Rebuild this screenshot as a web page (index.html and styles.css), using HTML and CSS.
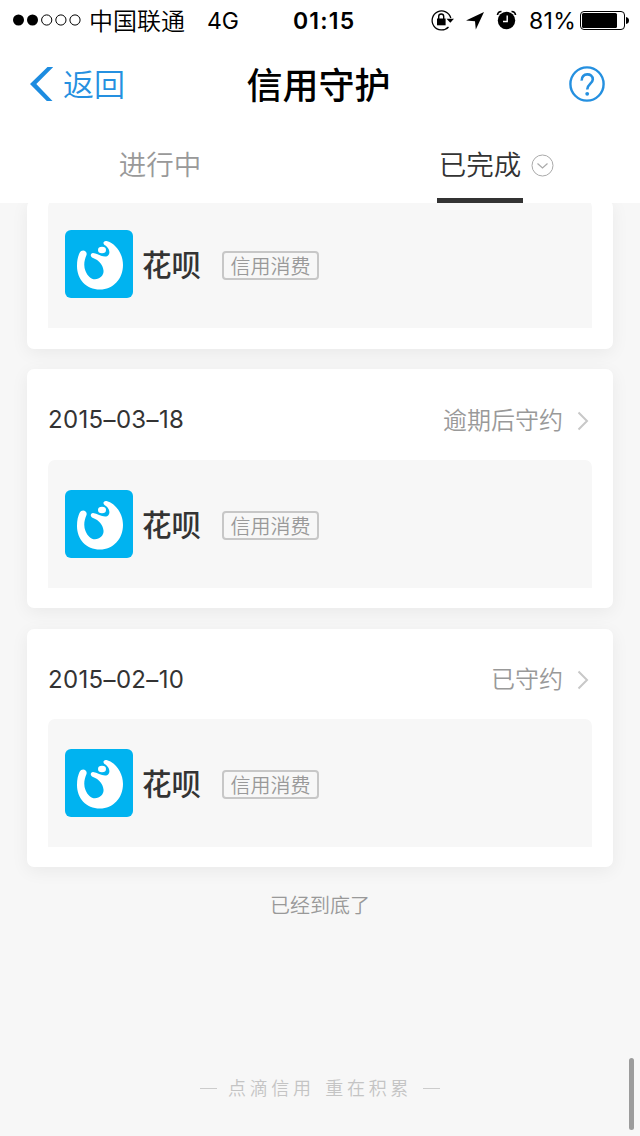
FILE: index.html
```html
<!DOCTYPE html>
<html lang="zh-CN">
<head>
<meta charset="utf-8">
<title>信用守护</title>
<link rel="stylesheet" href="styles.css">
</head>
<body>
<svg class="defs" width="0" height="0">
  <symbol id="logo" viewBox="0 0 68 68">
    <rect width="68" height="68" rx="6" fill="#00b3f0"/>
    <path d="M21.500 25C19 31 18.500 36 20.500 41C22.500 46 26 49.300 30 49.300C35 49 39 45.500 38.500 40.500C38 35 34 30 28 28C25 27 25 23.500 28 23C33 23.500 38 28 42.500 26C46.500 23 43.500 17 39.500 15C37.500 13.500 38.500 10.500 41.500 11C51 13.500 58 24 58 35C58 49 48 59.500 35 59.500C21 59.500 12 49 12 36C12 30 13 26.500 14.500 23C16.500 18.500 22.800 20.500 21.500 25Z" fill="#fff"/>
    <ellipse cx="37" cy="20" rx="4" ry="3.200" fill="#fff"/>
  </symbol>
  <symbol id="chevron" viewBox="0 0 12 20"><path d="M1.500 1.500L10 10L1.500 18.500" fill="none" stroke="#c8c8c8" stroke-width="2"/></symbol>
</svg>
<div class="screen">
  <header class="top">
    <div class="status">
      <svg class="signal" width="68" height="12" viewBox="0 0 68 12">
        <circle cx="5.500" cy="6" r="5.500"/><circle cx="19.500" cy="6" r="5.500"/>
        <g fill="none" stroke="#000"><circle cx="33.700" cy="6" r="5.100"/><circle cx="47.900" cy="6" r="5.100"/><circle cx="62" cy="6" r="5.100"/></g>
      </svg>
      <span class="carrier">中国联通</span>
      <span class="network">4G</span>
      <span class="clock">01:15</span>
      <svg class="tray" width="88" height="24" viewBox="430 8 88 24">
        <path d="M448.500 27A9.500 9.500 0 1 1 450.800 18" fill="none" stroke="#000" stroke-width="1.300"/>
        <path d="M446.500 18.800h7.500l-3.700 4z"/>
        <path d="M437 18.500h8.600v6.800H437z"/><path d="M438.700 19v-2.500a2.500 2.500 0 0 1 5 0V19" fill="none" stroke="#000" stroke-width="1.400"/>
        <path d="M484 12L466 20.500L475 21.300L475.800 29.500Z"/>
        <circle cx="506.500" cy="20.500" r="8.700"/><path d="M507.200 15.500v6h-4.200" fill="none" stroke="#fff" stroke-width="1.400"/>
        <path d="M497.500 15a4 4 0 0 1 4-3.500M511.500 11.500a4 4 0 0 1 4 3.500" fill="none" stroke="#000" stroke-width="1.700"/>
      </svg>
      <span class="percent">81%</span>
      <svg class="battery" width="49" height="19" viewBox="0 0 49 19">
        <rect x=".5" y=".5" width="44" height="18" rx="3.500" fill="none" stroke="#000"/>
        <rect x="2" y="2" width="35" height="15" rx="1.500"/><path d="M46 6q3 .5 3 3.500t-3 3.500z"/>
      </svg>
    </div>
    <nav class="nav">
      <a class="back"><svg width="24" height="36" viewBox="0 0 24 36"><path d="M18.500 1H24.300L7.300 18L23.500 35H17.800L1 18Z" fill="#1d8ce0"/></svg><span>返回</span></a>
      <h1 class="title">信用守护</h1>
      <svg class="help" width="38" height="38" viewBox="0 0 38 38" fill="none" stroke="#2590e0">
        <circle cx="19" cy="19" r="16.600" stroke-width="2.400"/>
        <path d="M13.700 15.600C13.200 7.500 25 7.500 24.800 14.500C24.700 18.500 19.200 19 19.200 24.600" stroke-width="2.600"/><circle cx="19.200" cy="28.800" r="1.900" fill="#2590e0" stroke="none"/>
      </svg>
    </nav>
    <div class="tabs">
      <div class="tab"><span class="tab-label">进行中</span></div>
      <div class="tab"><span class="tab-label tab-current">已完成</span>
        <svg class="filter" width="23" height="23" viewBox="0 0 23 23" fill="none" stroke="#aaa"><circle cx="11.500" cy="11.500" r="10.500"/><path d="M6.500 9.500L11.500 14L16.500 9.500" stroke-width="1.200"/></svg>
      </div>
    </div>
  </header>
  <main class="list">
    <section class="card card-first">
      <div class="entry"><svg class="logo"><use href="#logo"/></svg><b class="name">花呗</b><span class="tag">信用消费</span></div>
    </section>
    <section class="card">
      <div class="card-head"><time class="date">2015–03–18</time><span class="state">逾期后守约</span><svg class="chevron"><use href="#chevron"/></svg></div>
      <div class="entry"><svg class="logo"><use href="#logo"/></svg><b class="name">花呗</b><span class="tag">信用消费</span></div>
    </section>
    <section class="card card-last">
      <div class="card-head"><time class="date">2015–02–10</time><span class="state">已守约</span><svg class="chevron"><use href="#chevron"/></svg></div>
      <div class="entry"><svg class="logo"><use href="#logo"/></svg><b class="name">花呗</b><span class="tag">信用消费</span></div>
    </section>
    <p class="end">已经到底了</p>
    <p class="slogan"><i class="dash"></i><span>点滴信用</span><span>重在积累</span><i class="dash"></i></p>
    <div class="scrollbar"></div>
  </main>
</div>
</body>
</html>
```

FILE: styles.css
```css
* { box-sizing: border-box; }
body { margin: 0; font-family: Inter, "Noto Sans CJK SC", sans-serif; color: #333; background: #f7f7f7; }
h1, p { margin: 0; font-weight: inherit; }
svg { display: block; flex: none; }
span, b, time, h1 { white-space: nowrap; }
.defs { position: absolute; }
.screen { width: 640px; height: 1136px; overflow: hidden; display: flex; flex-direction: column; }
.top { height: 203px; flex: none; background: #fff; color: #000; position: relative; z-index: 1; }
.status { height: 40px; display: flex; align-items: center; padding-left: 13px; font-size: 24px; line-height: 40px; }
.carrier { margin-left: 8px; width: 118px; font-weight: 350; padding-top: 3px; }
.network { width: 86px; font-size: 23px; padding-top: 2px; font-weight: 380; }
.clock { width: 137px; font-weight: 600; font-size: 23px; letter-spacing: 1.200px; padding-top: 2px; }
.percent { margin-left: 11px; width: 51px; font-size: 23px; letter-spacing: .3px; padding-top: 2px; font-weight: 380; }
.nav { height: 88px; display: grid; grid-template-columns: 1fr auto 1fr; align-items: center; padding: 0 34px 0 29px; }
.back { display: flex; align-items: center; color: #2590e0; font-size: 31px; line-height: 40px; gap: 10px; font-weight: 350; }
.back span { padding-top: 1px; }
.title { font-size: 36px; font-weight: 500; line-height: 48px; padding: 3px 0 0 2px; }
.help { justify-self: end; }
.tabs { height: 75px; display: grid; grid-template-columns: 1fr 1fr; }
.tab { display: flex; justify-content: center; align-items: flex-start; position: relative; }
.tab-label { height: 75px; line-height: 74px; padding: 0 2px; font-size: 27.500px; color: #999; font-weight: 350; }
.tab-current { color: #333; border-bottom: 5px solid #333; }
.filter { position: absolute; left: 211px; top: 26px; }
.list { flex: 1; position: relative; padding: 0 27px; display: flex; flex-direction: column; }
.card { height: 239px; flex: none; margin-bottom: 21px; padding: 0 21px; background: #fff; border-radius: 7px; box-shadow: 0 4px 18px rgba(0,0,0,.06); }
.card-first { height: 149px; margin-top: -3px; margin-bottom: 20px; }
.card-last { height: 238px; margin-bottom: 18px; }
.card-head { height: 91px; display: flex; align-items: center; padding: 10px 3px 0 0; }
.card-last .card-head { height: 90px; }
.date { flex: 1; font-size: 24px; font-weight: 380; letter-spacing: .35px; }
.state { font-size: 24px; line-height: 36px; color: #999; font-weight: 350; padding-top: 2px; }
.chevron { width: 12px; height: 20px; margin-left: 14px; margin-top: 2px; }
.entry { height: 128px; background: #f7f7f7; border-radius: 7px 7px 0 0; display: flex; align-items: center; padding-left: 17px; }
.logo { width: 68px; height: 68px; }
.name { margin-left: 9px; width: 80px; font-size: 29.500px; font-weight: 500; line-height: 40px; padding-top: 2px; }
.tag { width: 97px; height: 29px; margin-top: 3px; border: 2px solid #c7c7c7; border-radius: 4px; text-align: center; font-size: 20px; line-height: 28px; color: #999; font-weight: 350; }
.end { text-align: center; font-size: 20px; line-height: 42px; color: #999; font-weight: 350; }
.slogan { display: flex; justify-content: center; align-items: center; gap: 10.500px; margin-top: 142px; font-size: 18px; line-height: 36px; letter-spacing: 3.700px; color: #c4c4c4; font-weight: 350; }
.slogan span { padding-top: 2px; }
.dash { width: 17px; height: 1px; background: #ccc; }
.scrollbar { position: absolute; right: 6px; top: 855px; width: 5px; height: 72px; border-radius: 3px; background: #9c9c9c; }
```
